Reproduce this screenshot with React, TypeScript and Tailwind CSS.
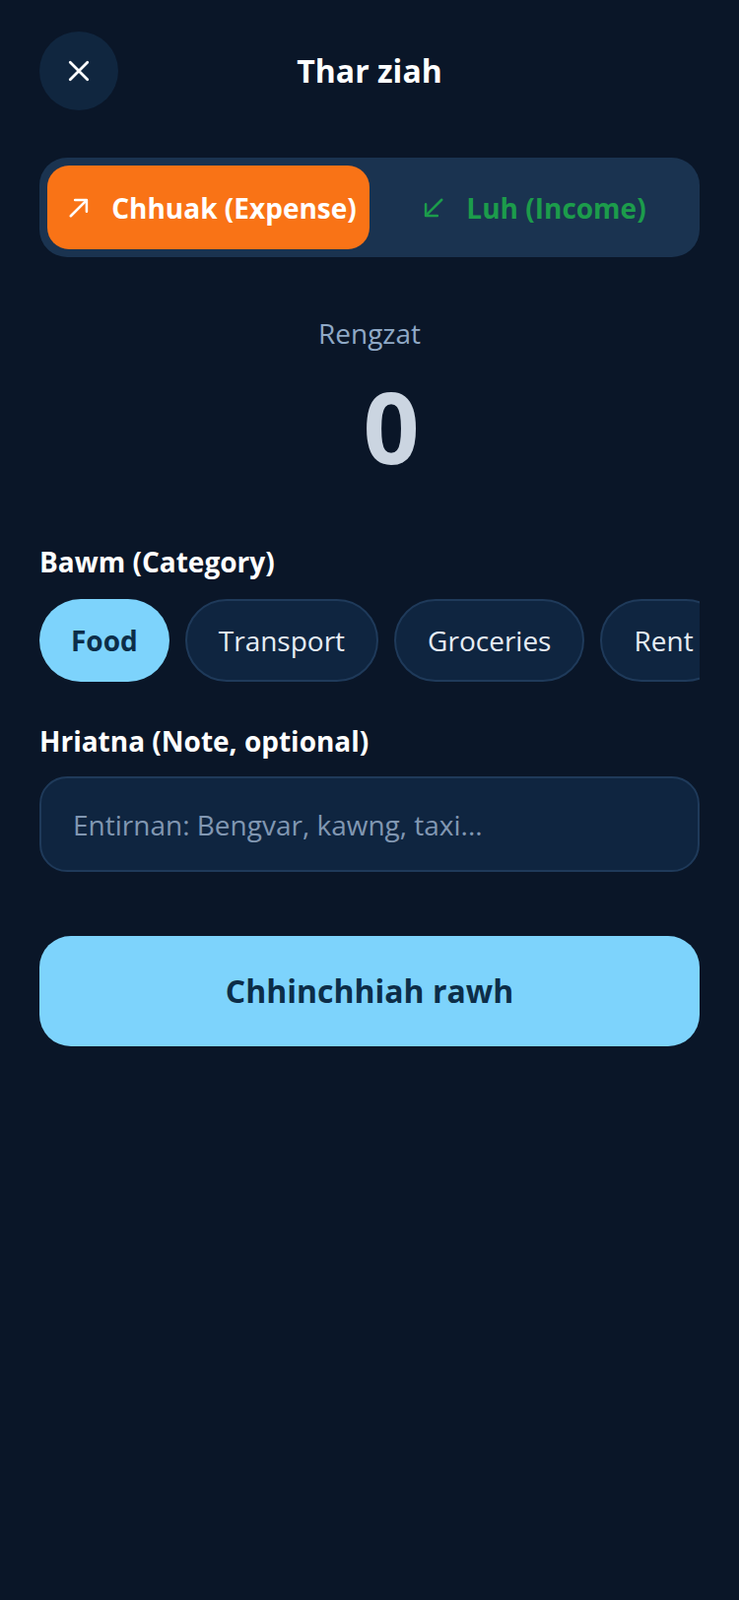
import React, { useState } from 'react';

const categories = ['Food', 'Transport', 'Groceries', 'Rent', 'Bills', 'Health'];

const ArrowUpRightIcon = ({ className }: { className?: string }) => (
  <svg viewBox="0 0 20 20" width="22" height="22" fill="none" stroke="currentColor" strokeWidth="2.3" strokeLinecap="round" strokeLinejoin="round" className={className}>
    <path d="M2.5 17.5 17 3" />
    <path d="M6.5 2.8H17.2V13.5" />
  </svg>
);

const ArrowDownLeftIcon = ({ className }: { className?: string }) => (
  <svg viewBox="0 0 20 20" width="22" height="22" fill="none" stroke="currentColor" strokeWidth="2.3" strokeLinecap="round" strokeLinejoin="round" className={className}>
    <path d="M17.5 2.5 3 17" />
    <path d="M2.8 6.5V17.2H13.5" />
  </svg>
);

export default function App() {
  const [type, setType] = useState<'expense' | 'income'>('expense');
  const [category, setCategory] = useState('Food');
  const [note, setNote] = useState('');

  return (
    <div
      className="min-h-[1624px] w-[750px] bg-[#0a1628] px-10 pt-8 text-white"
      style={{ fontFamily: '"Open Sans", "Noto Sans", sans-serif' }}
    >
      {/* Header */}
      <div className="relative flex h-20 items-center justify-center">
        <button className="absolute left-0 top-0 flex h-20 w-20 items-center justify-center rounded-full bg-[#10263f] text-white">
          <svg viewBox="0 0 24 24" width="30" height="30" fill="none" stroke="currentColor" strokeWidth="2.2" strokeLinecap="round">
            <path d="M5 5l14 14M19 5 5 19" />
          </svg>
        </button>
        <h1 className="text-[32px] font-bold leading-none text-white">Thar ziah</h1>
      </div>

      {/* Type toggle */}
      <div className="mt-12 flex h-[101px] rounded-[28px] bg-[#1a3350] p-2">
        <button
          onClick={() => setType('expense')}
          className={`flex flex-1 items-center justify-center gap-[22px] rounded-[22px] pl-2 text-[28px] font-bold ${
            type === 'expense' ? 'bg-[#f97316] text-white' : 'text-[#f97316]'
          }`}
        >
          <ArrowUpRightIcon />
          <span>Chhuak (Expense)</span>
        </button>
        <button
          onClick={() => setType('income')}
          className={`flex flex-1 items-center justify-center gap-[22px] rounded-[22px] pl-2 text-[28px] font-bold ${
            type === 'income' ? 'bg-[#16a34a] text-white' : 'text-[#1c9c4b]'
          }`}
        >
          <ArrowDownLeftIcon />
          <span>Luh (Income)</span>
        </button>
      </div>

      {/* Amount */}
      <div className="mt-[57px] flex flex-col items-center">
        <div className="text-[28px] leading-[40px] text-[#8fa9c6]">Rengzat</div>
        <div className="mt-[24px] pl-[44px] text-[100px] font-bold leading-[100px] text-[#cbd5e1]">0</div>
      </div>

      {/* Category */}
      <div className="mt-[70px] text-[28px] font-bold leading-[36px] text-white">Bawm (Category)</div>
      <div className="mt-[20px] flex gap-4 overflow-hidden">
        {categories.map(c => (
          <button
            key={c}
            onClick={() => setCategory(c)}
            className={`flex h-[84px] shrink-0 items-center rounded-full px-8 text-[28px] ${
              category === c
                ? 'bg-[#7dd3fc] font-bold text-[#0c2d48]'
                : 'border-2 border-[#1f3a5a] bg-[#0f2540] text-[#e6edf5]'
            }`}
          >
            {c}
          </button>
        ))}
      </div>

      {/* Note */}
      <div className="mt-[42px] text-[28px] font-bold leading-[36px] text-white">Hriatna (Note, optional)</div>
      <input
        value={note}
        onChange={e => setNote(e.target.value)}
        placeholder="Entirnan: Bengvar, kawng, taxi..."
        className="mt-[18px] h-[97px] w-full rounded-[28px] border-2 border-[#1f3a5a] bg-[#0f2540] px-8 text-[28px] text-white outline-none placeholder:text-[#8197b2]"
      />

      {/* Save */}
      <button className="mt-[65px] flex h-[112px] w-full items-center justify-center rounded-[32px] bg-[#7dd3fc] text-[32px] font-bold text-[#0c2d48]">
        Chhinchhiah rawh
      </button>
    </div>
  );
}
